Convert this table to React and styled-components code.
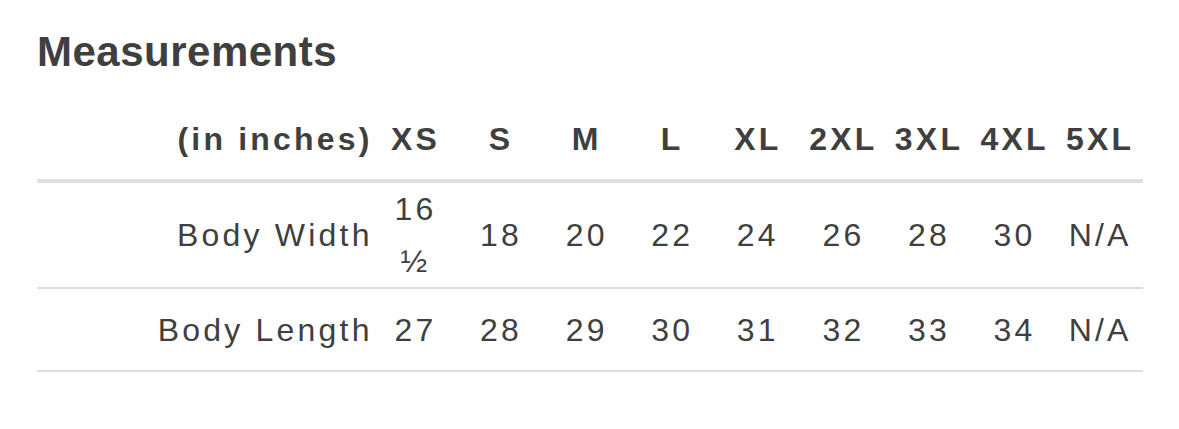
import React from "react";
import styled, { createGlobalStyle } from "styled-components";

const GlobalStyle = createGlobalStyle`
    body {
        margin: 0;
        background: #ffffff;
        font-family: "Liberation Sans", Arial, sans-serif;
        color: #3f3f3f;
    }
`;

const Wrapper = styled.div`
    width: 1106px;
    padding: 27px 0 0 37px;
`;

const Heading = styled.h2`
    margin: 0 0 21px;
    font-size: 42px;
    line-height: 50px;
    font-weight: 700;
    letter-spacing: 0.5px;
    color: #3f3f3f;
`;

const Table = styled.div`
    display: flex;
    flex-direction: column;
    font-size: 32px;
    line-height: 52px;
    letter-spacing: 0.1em;
`;

const Row = styled.div`
    display: grid;
    grid-template-columns: 1fr repeat(9, 85.6px);
    align-items: center;
    min-height: 81px;
    border-bottom: ${(p) => (p.$head ? "4px solid #dfdfe4" : "2px solid #dedee2")};
    font-weight: ${(p) => (p.$head ? 700 : 400)};
`;

const Label = styled.div`
    text-align: right;
`;

const Cell = styled.div`
    text-align: center;
    padding: 0 6px;
`;

const sizes = ["XS", "S", "M", "L", "XL", "2XL", "3XL", "4XL", "5XL"];

const rows = [
    {
        label: "Body Width",
        values: ["16 ½", "18", "20", "22", "24", "26", "28", "30", "N/A"],
    },
    {
        label: "Body Length",
        values: ["27", "28", "29", "30", "31", "32", "33", "34", "N/A"],
    },
];

export default function App() {
    return (
        <Wrapper>
            <GlobalStyle />
            <Heading>Measurements</Heading>
            <Table>
                <Row $head>
                    <Label>(in inches)</Label>
                    {sizes.map((s) => (
                        <Cell key={s}>{s}</Cell>
                    ))}
                </Row>
                {rows.map((row) => (
                    <Row key={row.label}>
                        <Label>{row.label}</Label>
                        {row.values.map((v, i) => (
                            <Cell key={i}>{v}</Cell>
                        ))}
                    </Row>
                ))}
            </Table>
        </Wrapper>
    );
}
